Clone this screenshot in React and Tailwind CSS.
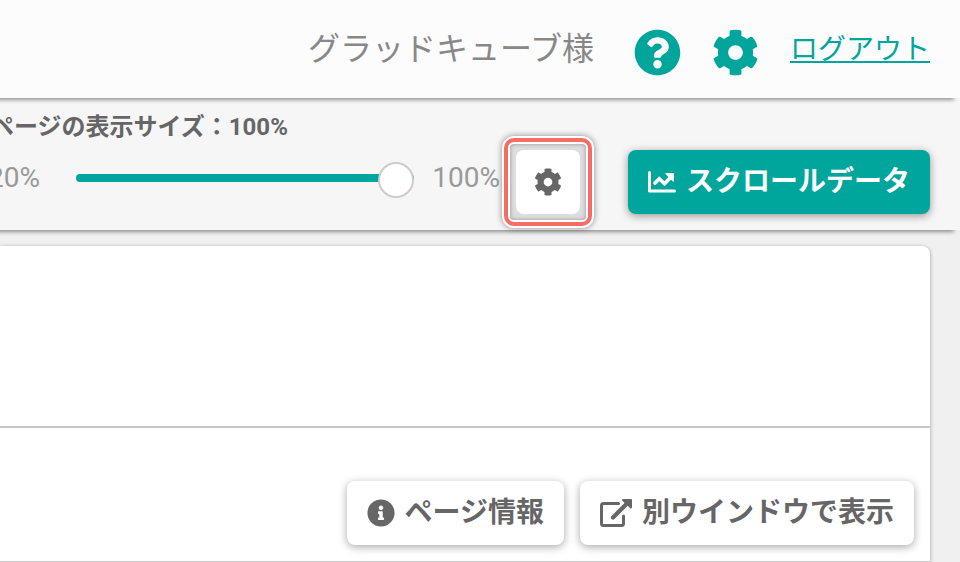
import { useState } from "react";
import { FaCog, FaQuestionCircle, FaInfoCircle } from "react-icons/fa";

const ChartIcon = () => (
  <svg viewBox="0 0 28 22" className="h-[22px] w-7 shrink-0" fill="none" stroke="currentColor" aria-hidden="true">
    <path d="M1.5 1.500v18.500H26.500" strokeWidth="3" strokeLinecap="round" strokeLinejoin="round" />
    <path d="M7 12l4.300-4.300 5.200 5L23 6" strokeWidth="3.600" strokeLinecap="round" />
    <path d="M18 2H25.300a.7.7 0 0 1 .7.7V10a.6.6 0 0 1-1 .4L17.500 3a.6.6 0 0 1 .5-1z" fill="currentColor" stroke="none" />
  </svg>
);

const ExternalIcon = () => (
  <svg viewBox="0 0 32 28" className="h-7 w-8 shrink-0" fill="none" stroke="currentColor" aria-hidden="true">
    <path d="M18.500 4.500H3.500a2 2 0 0 0-2 2V24.500a2 2 0 0 0 2 2H21.500a2 2 0 0 0 2-2v-7.500" strokeWidth="3" strokeLinecap="round" />
    <path d="M13 18.500L27 4.500" strokeWidth="4.200" strokeLinecap="round" />
    <path d="M23 0H31a1 1 0 0 1 1 1V8.500a1 1 0 0 1-1.700.7L22.300 1.700A1 1 0 0 1 23 0z" fill="currentColor" stroke="none" />
  </svg>
);

const panelButton =
  "flex h-16 items-center gap-2.5 rounded-lg bg-white px-5 text-[28px] leading-none font-bold text-[#666] shadow-[0_2px_8px_rgba(0,0,0,0.35)]";

export default function App() {
  const [size, setSize] = useState(100);
  return (
    <div className="flex h-screen flex-col overflow-hidden bg-[#f0f0f0] font-[Roboto,'Noto_Sans_CJK_JP',sans-serif]">
      <header className="relative z-20 flex h-[98px] shrink-0 items-center justify-end bg-[#fcfcfc] pr-[30px] shadow-[-6px_2px_4px_rgba(0,0,0,0.4)]">
        <span className="mr-10 text-[32px] leading-none text-[#888]">グラッドキューブ様</span>
        <button type="button" aria-label="ヘルプ" className="mr-[31px] pt-1.5 text-[#00a69c]">
          <FaQuestionCircle size={47} />
        </button>
        <button type="button" aria-label="設定" className="mr-[31px] pt-1.5 text-[#00a69c]">
          <FaCog size={47} />
        </button>
        <a href="#logout" className="pt-0.5 text-[28px] leading-none text-[#00a69c] underline">ログアウト</a>
      </header>

      <section className="relative z-10 flex h-[132px] shrink-0 items-start justify-end bg-[#f6f6f6] pt-3 pr-[30px] shadow-[-6px_2px_4px_rgba(0,0,0,0.4)]">
        <div className="flex flex-1 flex-col">
          <label htmlFor="size" className="-ml-2.5 text-2xl leading-[34px] font-bold text-[#666]">
            ページの表示サイズ：{size}%
          </label>
          <div className="-ml-4 flex h-[68px] items-center text-[28px] leading-none text-[#999]">
            <span className="w-14 shrink-0 text-right">20%</span>
            <input
              id="size"
              type="range"
              min="20"
              max="100"
              value={size}
              onChange={(e) => setSize(Number(e.target.value))}
              className="mr-[18px] ml-9 h-9 min-w-0 flex-1 appearance-none bg-transparent [&::-webkit-slider-runnable-track]:h-2 [&::-webkit-slider-runnable-track]:rounded-full [&::-webkit-slider-runnable-track]:bg-[#00a69c] [&::-webkit-slider-thumb]:-mt-3 [&::-webkit-slider-thumb]:size-9 [&::-webkit-slider-thumb]:appearance-none [&::-webkit-slider-thumb]:rounded-full [&::-webkit-slider-thumb]:border-2 [&::-webkit-slider-thumb]:border-solid [&::-webkit-slider-thumb]:border-[#ccc] [&::-webkit-slider-thumb]:bg-white"
            />
            <span>100%</span>
          </div>
        </div>
        <div className="mt-[26px] mr-[34px] ml-0.5 rounded-xl border-2 border-white bg-white shadow-[0_0_6px_rgba(0,0,0,0.45)]">
          <div className="rounded-[10px] border-4 border-[#f76c64] bg-white p-0.5">
            <div className="rounded-sm bg-[#dedede] p-1.5 shadow-[inset_0_0_4px_rgba(0,0,0,0.35)]">
              <button type="button" aria-label="表示設定" className="flex size-16 items-center justify-center rounded-lg bg-white text-[#666]">
                <FaCog size={28} />
              </button>
            </div>
          </div>
        </div>
        <button type="button" className="mt-10 flex h-16 items-center gap-2.5 rounded-lg bg-[#00a69c] px-5 text-[28px] leading-none font-bold text-white shadow-[0_2px_8px_rgba(0,0,0,0.4)]">
          <ChartIcon />
          スクロールデータ
        </button>
      </section>

      <main className="mt-4 mr-[30px] flex-1 rounded-tr-lg bg-white shadow-[0_1px_4px_rgba(0,0,0,0.35)]">
        <div className="h-[182px] border-b-2 border-[#c8c8c8]" />
        <div className="flex h-[134px] items-end justify-end gap-4 border-b border-[#c8c8c8] pr-4 pb-4">
          <button type="button" className={panelButton}>
            <FaInfoCircle size={28} />
            ページ情報
          </button>
          <button type="button" className={panelButton}>
            <ExternalIcon />
            別ウインドウで表示
          </button>
        </div>
      </main>
    </div>
  );
}
